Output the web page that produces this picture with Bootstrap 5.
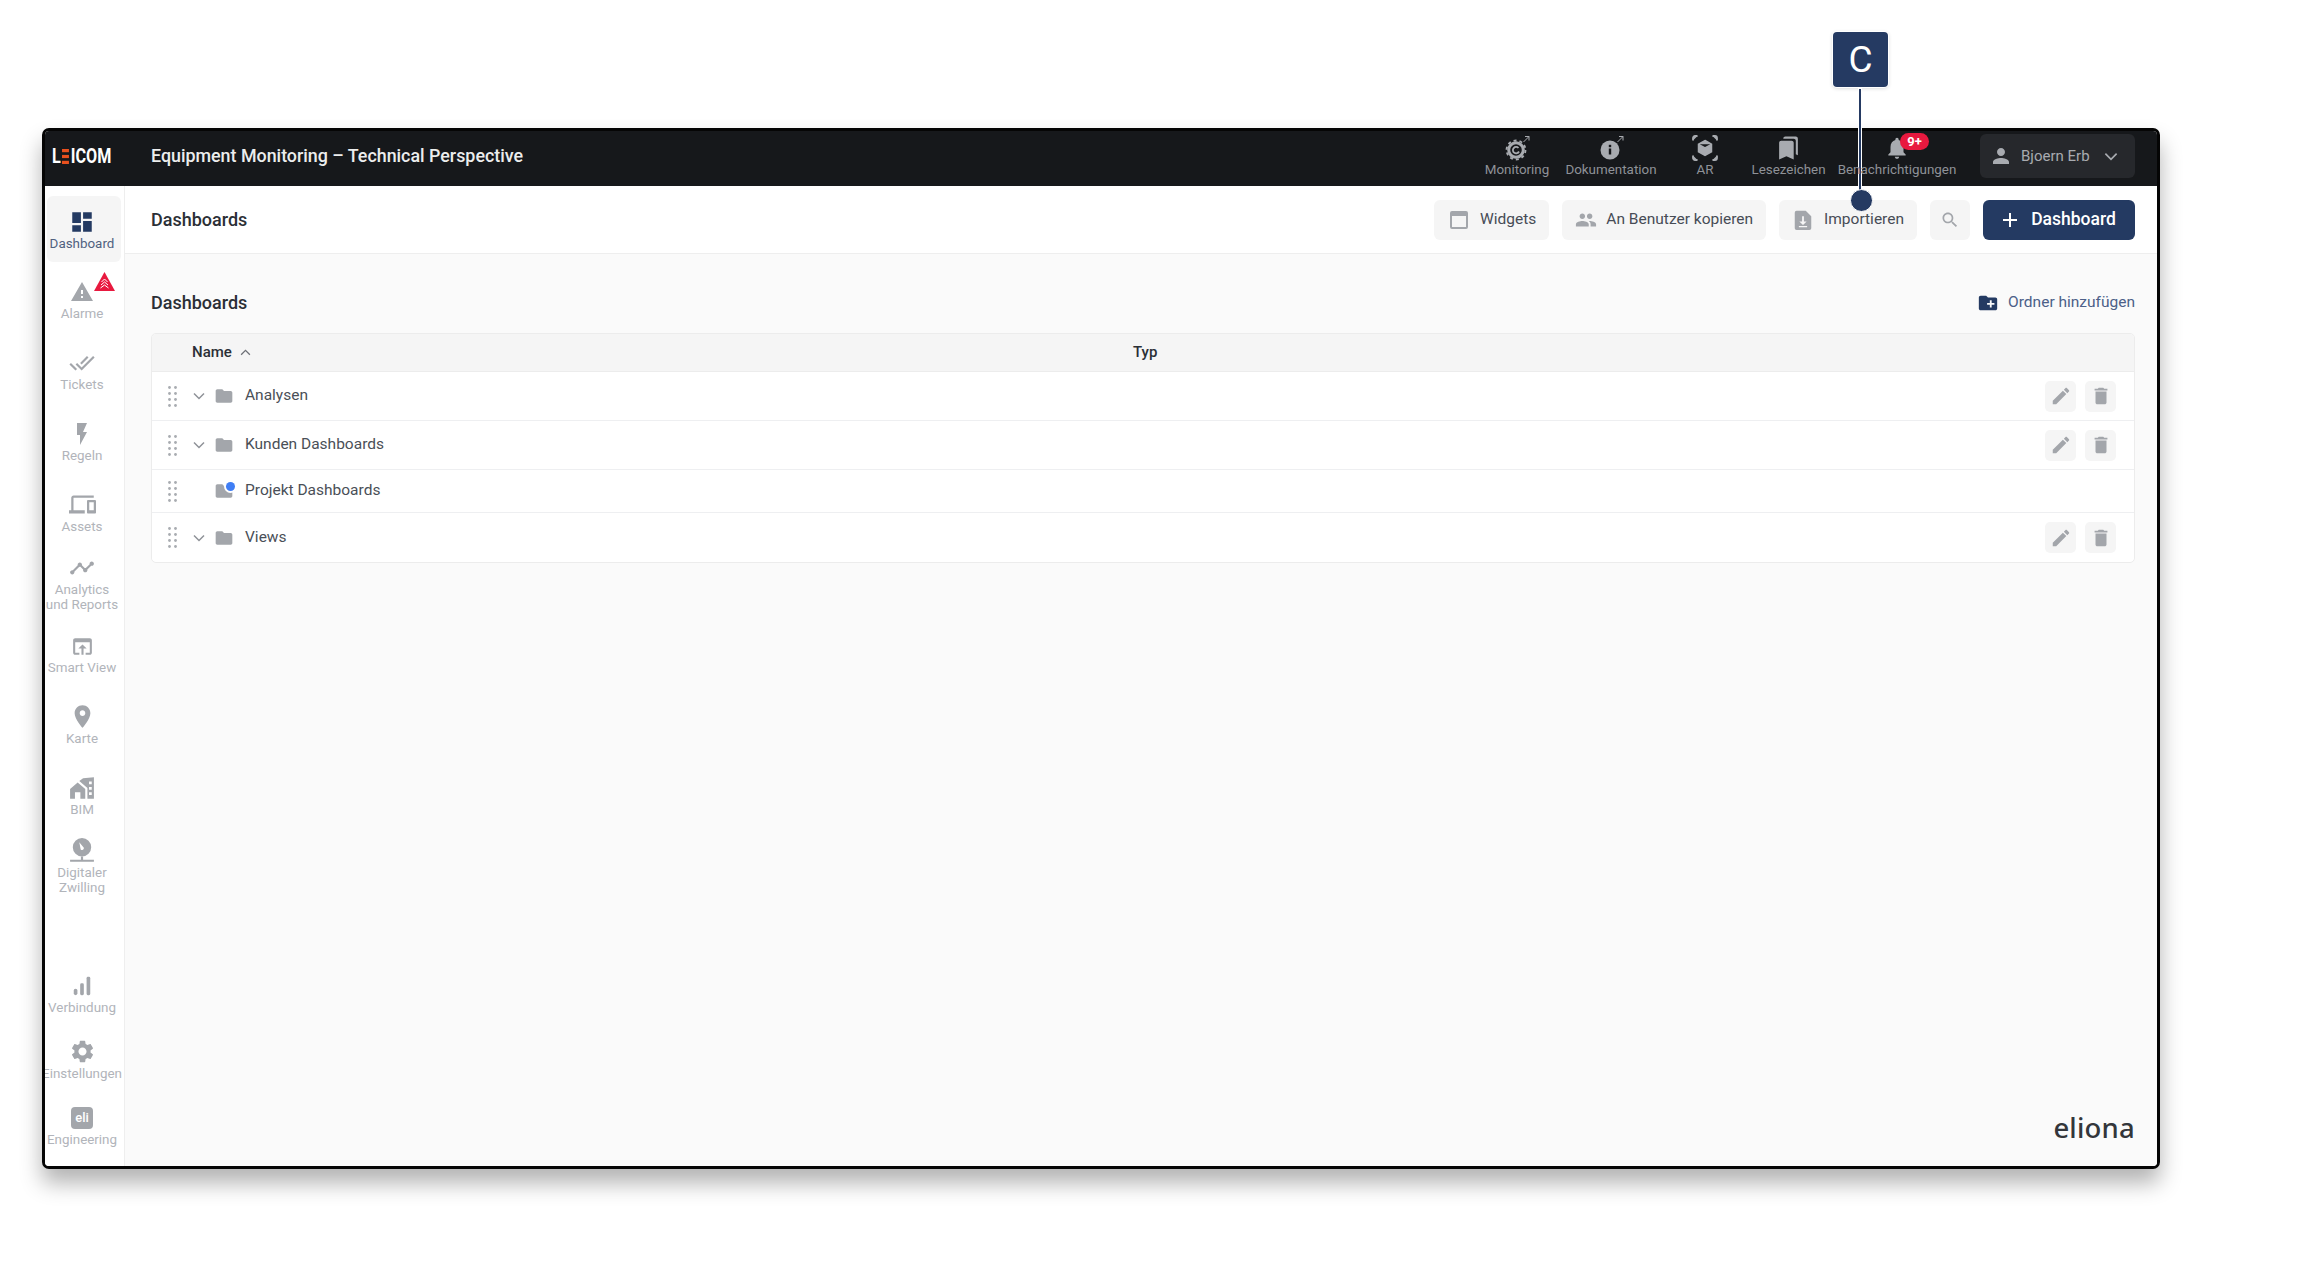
<!doctype html>
<html lang="de">
<head>
<meta charset="utf-8">
<title>Dashboards</title>
<link href="https://cdn.jsdelivr.net/npm/bootstrap@5.3.0/dist/css/bootstrap.min.css" rel="stylesheet">
<style>
html,body{height:100%;}
body{background:#fff;font-family:Roboto,"Liberation Sans",sans-serif;padding:128px 0 0 42px;overflow:hidden;position:relative;color:#2b2f36;}
svg{fill:currentColor;display:block;flex:none;}
.app-window{width:2118px;height:1041px;border:3px solid #050505;border-radius:7px;overflow:hidden;box-shadow:0 14px 22px rgba(0,0,0,.3);background:#fff;}
.top-bar{height:55px;background:#16181b;flex:none;padding-right:22px;}
.brand{width:106px;padding:0 0 4px 7px;flex:none;}
.brand-mark{color:#fff;font-weight:700;font-size:21px;line-height:1;transform:scaleX(.77);transform-origin:left center;}
.brand-mark svg{margin:0 2px;}
.bar-title{color:#eceded;font-size:17.85px;font-weight:500;padding-bottom:4px;}
.bar-item{height:55px;padding-top:4px;color:#a8abb0;position:relative;}
.bar-item span{font-size:13.4px;line-height:15px;margin-top:1px;color:#8f9298;white-space:nowrap;}
.w-mon{width:80px}.w-doc{width:108px}.w-ar{width:80px}.w-les{width:87px}.w-ben{width:130px}
.user-box{width:155px;height:44px;background:#26282c;border-radius:6px;margin:0 0 5px 18px;padding:0 17px 0 9px;color:#a8abb0;font-size:15px;}
.bell-badge{position:absolute;left:68px;top:2px;height:17px;width:29px;background:#e8193f;border-radius:9px;color:#fff;font-size:13px;font-weight:700;line-height:17px;text-align:center;}
.side-nav{width:80px;flex:none;border-right:1px solid #eee;padding:10px 0 8px;background:#fff;}
.nav-cell{height:66px;width:74px;margin-left:1.5px;margin-bottom:4.75px;padding-right:3px;position:relative;color:#a3a6ab;border-radius:6px;text-decoration:none;}
.nav-cell b{font-size:13.4px;font-weight:400;line-height:15px;color:#b1b4ba;text-align:center;white-space:nowrap;}
.nav-cell .ico-box{height:28px;}
.nav-cell.is-active{background:#f5f5f5;color:#243a62;}
.nav-cell.is-active b{color:#50617f;}
.nav-cell.tight{margin-bottom:0;}
.alarm-badge{position:absolute;left:47px;top:5px;}
.eli-chip{width:22px;height:22px;border-radius:4px;background:#a3a6ab;color:#fff;font-size:13px;font-weight:500;line-height:22px;text-align:center;}
.page-main{min-width:0;background:#fafafa;}
.sub-bar{height:68px;background:#fff;border-bottom:1px solid #eee;padding:0 22px 0 26px;flex:none;}
.head-text{font-size:18px;font-weight:500;color:#2b2f36;}
.tool-btn{height:40px;background:#f5f5f5;border:0;border-radius:6px;font-size:15.5px;padding:0 13px;display:flex;align-items:center;color:#474c55;}
.tool-btn svg{color:#a3a6ab;}
.tool-btn:hover{background:#f5f5f5;}
.w-search{width:40px;padding:0;justify-content:center;}
.primary-btn{width:152px;height:40px;background:#243a62;color:#fff;border:0;border-radius:6px;font-size:17.5px;font-weight:500;display:flex;align-items:center;justify-content:center;gap:13px;}
.primary-btn:hover{background:#243a62;color:#fff;}
.body-pad{padding:0 22px 0 26px;flex:1;}
.title-row{height:79px;padding-top:17px;flex:none;}
.add-link{color:#4c6088;font-size:15.5px;text-decoration:none;gap:9px;margin-top:1px;}
.add-link svg{color:#243a62;}
.tree-card{border:1px solid #ececec;border-radius:5px;overflow:hidden;background:#fff;flex:none;}
.tree-head{height:37px;background:#f5f5f5;padding-left:40px;font-size:15px;font-weight:500;color:#2b2f36;}
.tree-head .col-name{width:941px;}
.tree-row{padding:0 18px 0 16px;border:0;border-bottom:2px solid #eeeff1;font-size:15.5px;color:#4a4f57;flex:none;}
.tree-row:last-child{border-bottom:0;}
.row-lg{height:49px}.row-sm{height:43px}.row-end{height:49px}
.grip{width:9px;}
.chev{width:28px;margin-left:8px;color:#8f9298;padding-left:8px;}
.chev-none{width:28px;padding:0;}
.fold{color:#a3a6ab;width:32px;padding-left:1px;position:relative;}
.dot-blue{position:absolute;left:13px;top:.5px;width:9px;height:9px;border-radius:50%;background:#3f7ef5;box-shadow:0 0 0 2px #fff;}
.act-btn{width:31px;height:31px;background:#f5f5f5;border:0;border-radius:5px;padding:0;color:#a3a6ab;display:flex;align-items:center;justify-content:center;}
.act-btn:hover{background:#f5f5f5;color:#a3a6ab;}
.logo-eliona{font-family:"Noto Sans",sans-serif;font-size:27.5px;font-weight:500;line-height:1;color:#33363b;padding-bottom:25px;letter-spacing:.2px;}
.note-box{position:absolute;left:1833px;top:32px;width:55px;height:55px;background:#253a62;border-radius:4px;color:#fff;font-size:37px;line-height:55px;text-align:center;box-shadow:0 0 0 1px #fff,0 1px 4px rgba(0,0,0,.2);}
.note-line{position:absolute;left:1859px;top:89px;width:2px;height:102px;background:#253a62;box-shadow:0 0 0 1px #fff;}
.note-dot{position:absolute;left:1849.5px;top:189px;width:23px;height:23px;background:#253a62;border:1px solid #fff;border-radius:50%;}
</style>
</head>
<body>
<svg width="0" height="0" class="position-absolute">
<defs>
<symbol id="i-dash" viewBox="0 0 24 24"><path d="M3 13h8V3H3v10zm0 8h8v-6H3v6zm10 0h8V11h-8v10zm0-18v6h8V3h-8z"/></symbol>
<symbol id="i-warn" viewBox="0 0 24 24"><path d="M1 21h22L12 2 1 21zm12-3h-2v-2h2v2zm0-4h-2v-4h2v4z"/></symbol>
<symbol id="i-done" viewBox="0 0 24 24"><path d="M18 7l-1.41-1.41-6.34 6.34 1.41 1.41L18 7zm4.24-1.41L11.66 16.17 7.48 12l-1.41 1.41L11.66 19l12-12-1.42-1.41zM.41 13.41L6 19l1.41-1.41L1.83 12 .41 13.41z"/></symbol>
<symbol id="i-bolt" viewBox="0 0 24 24"><path d="M7 1v12h3v10l7-13h-4l4-9z"/></symbol>
<symbol id="i-devices" viewBox="0 0 24 24"><path d="M4 6h18V4H4c-1.1 0-2 .9-2 2v11H0v3h14v-3H4V6zm19 2h-6c-.55 0-1 .45-1 1v10c0 .55.45 1 1 1h6c.55 0 1-.45 1-1V9c0-.55-.45-1-1-1zm-1 9h-4v-7h4v7z"/></symbol>
<symbol id="i-timeline" viewBox="0 0 24 24"><path d="M23 8c0 1.1-.9 2-2 2-.18 0-.35-.02-.51-.07l-3.56 3.55c.05.16.07.34.07.52 0 1.1-.9 2-2 2s-2-.9-2-2c0-.18.02-.36.07-.52l-2.55-2.55c-.16.05-.34.07-.52.07s-.36-.02-.52-.07l-4.55 4.56c.05.16.07.33.07.51 0 1.1-.9 2-2 2s-2-.9-2-2 .9-2 2-2c.18 0 .35.02.51.07l4.56-4.55C8.02 9.36 8 9.18 8 9c0-1.1.9-2 2-2s2 .9 2 2c0 .18-.02.36-.07.52l2.55 2.55c.16-.05.34-.07.52-.07s.36.02.52.07l3.55-3.56C19.02 8.35 19 8.18 19 8c0-1.1.9-2 2-2s2 .9 2 2z"/></symbol>
<symbol id="i-smart" viewBox="0 0 24 24"><path d="M19 4H5c-1.11 0-2 .9-2 2v12c0 1.1.89 2 2 2h4v-2H5V8h14v10h-4v2h4c1.1 0 2-.9 2-2V6c0-1.1-.89-2-2-2zm-7 6l-4 4h3v6h2v-6h3l-4-4z"/></symbol>
<symbol id="i-place" viewBox="0 0 24 24"><path d="M12 2C8.13 2 5 5.13 5 9c0 5.25 7 13 7 13s7-7.75 7-13c0-3.87-3.13-7-7-7zm0 9.5c-1.38 0-2.5-1.12-2.5-2.5s1.12-2.5 2.5-2.5 2.5 1.12 2.5 2.5-1.12 2.5-2.5 2.5z"/></symbol>
<symbol id="i-bim" viewBox="0 0 24 24"><path d="M1 13l7-6 7 6v9h-4.500v-6h-5v6H1z"/><path d="M9.500 5.500 13 3l10-1v20h-6V12zM18.500 6v2.500H21V6zm0 5v2.500H21V11zm0 5v2.500H21V16z" fill-rule="evenodd"/></symbol>
<symbol id="i-twin" viewBox="0 0 24 24"><path fill-rule="evenodd" d="M12 0a8.500 8.500 0 1 1 0 17a8.500 8.500 0 0 1 0-17zM9.500 4l1.300 6.500a1.700 1.700 0 0 0 2.900-1.500z"/><path d="M11 17h2v3h10v2H1v-2h10z"/></symbol>
<symbol id="i-signal" viewBox="0 0 24 24"><rect x="3" y="15" width="4" height="7" rx="2"/><rect x="10" y="9" width="4" height="13" rx="1.500"/><rect x="17" y="2" width="4" height="20" rx="1.500"/></symbol>
<symbol id="i-gear" viewBox="0 0 24 24"><path d="M19.140 12.940c.04-.3.06-.61.06-.94 0-.32-.02-.64-.07-.94l2.030-1.580c.18-.14.23-.41.12-.61l-1.920-3.320c-.12-.22-.37-.29-.59-.22l-2.390.96c-.5-.38-1.030-.7-1.620-.94l-.36-2.540c-.04-.24-.24-.41-.48-.41h-3.840c-.24 0-.43.17-.47.41l-.36 2.540c-.59.24-1.130.57-1.620.94l-2.390-.96c-.22-.08-.47 0-.59.22L2.740 8.870c-.12.21-.08.47.12.61l2.030 1.580c-.05.3-.09.63-.09.94s.02.64.07.94l-2.030 1.580c-.18.14-.23.41-.12.61l1.920 3.320c.12.22.37.29.59.22l2.390-.96c.5.38 1.030.7 1.620.94l.36 2.540c.05.24.24.41.48.41h3.840c.24 0 .44-.17.47-.41l.36-2.540c.59-.24 1.130-.56 1.620-.94l2.390.96c.22.08.47 0 .59-.22l1.920-3.320c.12-.22.07-.47-.12-.61l-2.010-1.580zM12 15.600c-1.980 0-3.600-1.620-3.600-3.600s1.620-3.600 3.600-3.600 3.600 1.620 3.600 3.600-1.620 3.600-3.600 3.600z"/></symbol>
<symbol id="i-books" viewBox="0 0 24 24"><path d="M19 18l2 1V3c0-1.100-.9-2-2-2H8.990C7.890 1 7 1.900 7 3h10c1.100 0 2 .9 2 2v13zM15 5H5c-1.100 0-2 .9-2 2v16l7-3 7 3V7c0-1.100-.9-2-2-2z"/></symbol>
<symbol id="i-bell" viewBox="0 0 24 24"><path d="M12 22c1.100 0 2-.9 2-2h-4c0 1.100.89 2 2 2zm6-6v-5c0-3.070-1.640-5.640-4.500-6.320V4c0-.83-.67-1.500-1.500-1.500s-1.500.67-1.500 1.500v.68C7.630 5.360 6 7.920 6 11v5l-2 2v1h16v-1l-2-2z"/></symbol>
<symbol id="i-person" viewBox="0 0 24 24"><path d="M12 12c2.210 0 4-1.790 4-4s-1.790-4-4-4-4 1.790-4 4 1.790 4 4 4zm0 2c-2.670 0-8 1.340-8 4v2h16v-2c0-2.660-5.330-4-8-4z"/></symbol>
<symbol id="i-people" viewBox="0 0 24 24"><path d="M16 11c1.660 0 2.990-1.340 2.990-3S17.660 5 16 5c-1.660 0-3 1.340-3 3s1.340 3 3 3zm-8 0c1.660 0 2.990-1.340 2.990-3S9.660 5 8 5C6.340 5 5 6.340 5 8s1.340 3 3 3zm0 2c-2.330 0-7 1.170-7 3.500V19h14v-2.500c0-2.330-4.670-3.500-7-3.500zm8 0c-.29 0-.62.02-.97.05 1.160.84 1.970 1.970 1.970 3.450V19h6v-2.500c0-2.330-4.670-3.500-7-3.500z"/></symbol>
<symbol id="i-search" viewBox="0 0 24 24"><path d="M15.500 14h-.79l-.28-.27C15.410 12.590 16 11.110 16 9.500 16 5.910 13.090 3 9.500 3S3 5.910 3 9.500 5.910 16 9.500 16c1.610 0 3.090-.59 4.230-1.570l.27.28v.79l5 4.990L20.490 19l-4.990-5zm-6 0C7.010 14 5 11.990 5 9.500S7.010 5 9.500 5 14 7.010 14 9.500 11.990 14 9.500 14z"/></symbol>
<symbol id="i-folder" viewBox="0 0 24 24"><path d="M10 4H4c-1.100 0-1.990.9-1.990 2L2 18c0 1.100.9 2 2 2h16c1.100 0 2-.9 2-2V8c0-1.100-.9-2-2-2h-8l-2-2z"/></symbol>
<symbol id="i-newfolder" viewBox="0 0 24 24"><path d="M20 6h-8l-2-2H4c-1.110 0-1.990.89-1.990 2L2 18c0 1.110.89 2 2 2h16c1.110 0 2-.89 2-2V8c0-1.110-.89-2-2-2zm-1 8h-3v3h-2v-3h-3v-2h3V9h2v3h3v2z"/></symbol>
<symbol id="i-edit" viewBox="0 0 24 24"><path d="M3 17.250V21h3.750L17.810 9.940l-3.750-3.750L3 17.250zM20.710 7.040c.39-.39.39-1.020 0-1.410l-2.340-2.340c-.39-.39-1.020-.39-1.410 0l-1.830 1.830 3.750 3.750 1.830-1.830z"/></symbol>
<symbol id="i-trash" viewBox="0 0 24 24"><path d="M6 19c0 1.100.9 2 2 2h8c1.100 0 2-.9 2-2V7H6v12zM19 4h-3.500l-1-1h-5l-1 1H5v2h14V4z"/></symbol>
<symbol id="i-window" viewBox="0 0 24 24"><path fill-rule="evenodd" d="M5 3h14a2 2 0 0 1 2 2v14a2 2 0 0 1-2 2H5a2 2 0 0 1-2-2V5a2 2 0 0 1 2-2zm0 5v11h14V8z"/></symbol>
<symbol id="i-import" viewBox="0 0 24 24"><path fill-rule="evenodd" d="M15 2H5a2 2 0 0 0-2 2v17a2 2 0 0 0 2 2h14a2 2 0 0 0 2-2V8zM11 8h2v5.500h3l-4 4-4-4h3zM7.500 18.500h9V20h-9z"/></symbol>
<symbol id="i-grip" viewBox="0 0 9 21"><g fill="#a9acb1"><circle cx="1.500" cy="1.500" r="1.400"/><circle cx="7.500" cy="1.500" r="1.400"/><circle cx="1.500" cy="7.500" r="1.400"/><circle cx="7.500" cy="7.500" r="1.400"/><circle cx="1.500" cy="13.500" r="1.400"/><circle cx="7.500" cy="13.500" r="1.400"/><circle cx="1.500" cy="19.500" r="1.400"/><circle cx="7.500" cy="19.500" r="1.400"/></g></symbol>
<symbol id="i-chev" viewBox="0 0 12 8"><path d="M1 1.500l5 5 5-5" fill="none" stroke="currentColor" stroke-width="1.500"/></symbol>
</defs>
</svg>

<div class="note-box">C</div>
<div class="note-line"></div>
<div class="note-dot"></div>

<div class="app-window d-flex flex-column">
  <header class="top-bar d-flex align-items-center">
    <div class="brand"><div class="brand-mark d-flex align-items-center"><span>L</span><svg width="9" height="15" viewBox="0 0 9 15"><rect width="9" height="3.200" fill="#e8501e"/><rect y="5.900" width="9" height="3.200" fill="#e8501e"/><rect y="11.800" width="9" height="3.200" fill="#e8501e"/></svg><span>ICOM</span></div></div>
    <div class="bar-title">Equipment Monitoring – Technical Perspective</div>
    <nav class="d-flex align-items-start ms-auto">
      <div class="bar-item w-mon d-flex flex-column align-items-center">
        <svg width="26" height="26" viewBox="0 0 26 26"><circle cx="12" cy="15" r="7.300" fill="none" stroke="#a8abb0" stroke-width="3"/><circle cx="12" cy="15" r="9.500" fill="none" stroke="#a8abb0" stroke-width="1.800" stroke-dasharray="3 3"/><path d="M14.500 13a3.200 3.200 0 1 0 .5 3.500" fill="none" stroke="#a8abb0" stroke-width="1.800"/><path d="M19.500 7L25 1.500M21 1.500h4V5.500" fill="none" stroke="#a8abb0" stroke-width="1"/></svg>
        <span>Monitoring</span>
      </div>
      <div class="bar-item w-doc d-flex flex-column align-items-center">
        <svg width="26" height="26" viewBox="0 0 26 26"><circle cx="12" cy="15" r="9.500" fill="#a8abb0"/><rect x="10.800" y="13.500" width="2.400" height="6" fill="#16181b"/><rect x="10.800" y="9.800" width="2.400" height="2.400" fill="#16181b"/><path d="M19.500 7L25 1.500M21 1.500h4V5.500" fill="none" stroke="#a8abb0" stroke-width="1"/></svg>
        <span>Dokumentation</span>
      </div>
      <div class="bar-item w-ar d-flex flex-column align-items-center">
        <svg width="26" height="26" viewBox="0 0 26 26" fill="none" stroke="#a8abb0" stroke-width="1.500"><path d="M1 5.500V3a2 2 0 0 1 2-2h2.500M20.500 1H23a2 2 0 0 1 2 2v2.500M25 20.500V23a2 2 0 0 1-2 2h-2.500M5.500 25H3a2 2 0 0 1-2-2v-2.500" stroke-width="1.800"/><path d="M13 5.500l6.500 3.800v7.400L13 20.500l-6.500-3.800V9.300zM6.500 9.300L13 13l6.500-3.700M13 13v7.500"/></svg>
        <span>AR</span>
      </div>
      <div class="bar-item w-les d-flex flex-column align-items-center">
        <svg width="25" height="26"><use href="#i-books"/></svg>
        <span>Lesezeichen</span>
      </div>
      <div class="bar-item w-ben d-flex flex-column align-items-center">
        <svg width="26" height="26"><use href="#i-bell"/></svg>
        <span>Benachrichtigungen</span>
        <div class="bell-badge">9+</div>
      </div>
    </nav>
    <div class="user-box d-flex align-items-center">
      <svg width="24" height="24" class="me-1"><use href="#i-person"/></svg>
      <span class="flex-grow-1 ms-1">Bjoern Erb</span>
      <svg width="14" height="9" viewBox="0 0 12 8"><use href="#i-chev"/></svg>
    </div>
  </header>

  <div class="d-flex flex-grow-1" style="min-height:0">
    <aside class="side-nav d-flex flex-column">
      <a class="nav-cell is-active d-flex flex-column align-items-center justify-content-center"><div class="ico-box d-flex align-items-center"><svg width="26" height="26"><use href="#i-dash"/></svg></div><b>Dashboard</b></a>
      <a class="nav-cell d-flex flex-column align-items-center justify-content-center"><div class="ico-box d-flex align-items-center"><svg width="24" height="24"><use href="#i-warn"/></svg></div><b>Alarme</b>
        <svg class="alarm-badge" width="21" height="19" viewBox="0 0 21 19"><path d="M10.500 0L21 19H0z" fill="#e8193f"/><path d="M7.500 10l3-3 3 3M7 13l3.500-3 3.500 3M6.500 16l4-3 4 3" fill="none" stroke="#fff" stroke-width="1"/></svg></a>
      <a class="nav-cell d-flex flex-column align-items-center justify-content-center"><div class="ico-box d-flex align-items-center"><svg width="26" height="26"><use href="#i-done"/></svg></div><b>Tickets</b></a>
      <a class="nav-cell d-flex flex-column align-items-center justify-content-center"><div class="ico-box d-flex align-items-center"><svg width="24" height="24"><use href="#i-bolt"/></svg></div><b>Regeln</b></a>
      <a class="nav-cell d-flex flex-column align-items-center justify-content-center"><div class="ico-box d-flex align-items-center"><svg width="27" height="27"><use href="#i-devices"/></svg></div><b>Assets</b></a>
      <a class="nav-cell d-flex flex-column align-items-center justify-content-center"><div class="ico-box d-flex align-items-center"><svg width="26" height="26"><use href="#i-timeline"/></svg></div><b>Analytics<br>und Reports</b></a>
      <a class="nav-cell d-flex flex-column align-items-center justify-content-center"><div class="ico-box d-flex align-items-center"><svg width="25" height="25"><use href="#i-smart"/></svg></div><b>Smart View</b></a>
      <a class="nav-cell d-flex flex-column align-items-center justify-content-center"><div class="ico-box d-flex align-items-center"><svg width="27" height="27"><use href="#i-place"/></svg></div><b>Karte</b></a>
      <a class="nav-cell d-flex flex-column align-items-center justify-content-center"><div class="ico-box d-flex align-items-center"><svg width="26" height="26"><use href="#i-bim"/></svg></div><b>BIM</b></a>
      <a class="nav-cell d-flex flex-column align-items-center justify-content-center"><div class="ico-box d-flex align-items-center"><svg width="26" height="26"><use href="#i-twin"/></svg></div><b>Digitaler<br>Zwilling</b></a>
      <div class="mt-auto">
        <a class="nav-cell tight d-flex flex-column align-items-center justify-content-center"><div class="ico-box d-flex align-items-center"><svg width="22" height="22"><use href="#i-signal"/></svg></div><b>Verbindung</b></a>
        <a class="nav-cell tight d-flex flex-column align-items-center justify-content-center"><div class="ico-box d-flex align-items-center"><svg width="27" height="27"><use href="#i-gear"/></svg></div><b>Einstellungen</b></a>
        <a class="nav-cell tight d-flex flex-column align-items-center justify-content-center"><div class="ico-box d-flex align-items-center"><div class="eli-chip">eli</div></div><b>Engineering</b></a>
      </div>
    </aside>

    <main class="page-main flex-grow-1 d-flex flex-column">
      <div class="sub-bar d-flex align-items-center">
        <div class="head-text me-auto">Dashboards</div>
        <div class="d-flex" style="gap:13px">
          <button class="btn tool-btn" style="gap:9px"><svg width="24" height="24"><use href="#i-window"/></svg>Widgets</button>
          <button class="btn tool-btn" style="gap:9px"><svg width="22" height="22"><use href="#i-people"/></svg>An Benutzer kopieren</button>
          <button class="btn tool-btn" style="gap:10px"><svg width="22" height="22"><use href="#i-import"/></svg>Importieren</button>
          <button class="btn tool-btn w-search"><svg width="20" height="20"><use href="#i-search"/></svg></button>
          <button class="btn primary-btn"><svg width="16" height="16" viewBox="0 0 16 16"><path d="M7 1h2v6h6v2H9v6H7V9H1V7h6z"/></svg>Dashboard</button>
        </div>
      </div>
      <div class="body-pad d-flex flex-column">
        <div class="title-row d-flex align-items-center justify-content-between">
          <div class="head-text">Dashboards</div>
          <a class="add-link d-flex align-items-center"><svg width="22" height="22"><use href="#i-newfolder"/></svg>Ordner hinzufügen</a>
        </div>
        <div class="card tree-card">
          <div class="tree-head d-flex align-items-center">
            <div class="col-name d-flex align-items-center gap-2">Name <svg width="11" height="7" viewBox="0 0 12 8" style="color:#6f7278"><path d="M1 6.500l5-5 5 5" fill="none" stroke="currentColor" stroke-width="1.500"/></svg></div>
            <div>Typ</div>
          </div>
          <ul class="list-group list-group-flush">
            <li class="list-group-item tree-row row-lg d-flex align-items-center"><svg class="grip" width="9" height="21"><use href="#i-grip"/></svg><div class="chev"><svg width="12" height="8"><use href="#i-chev"/></svg></div><div class="fold"><svg width="20" height="20"><use href="#i-folder"/></svg></div><span class="flex-grow-1">Analysen</span><div class="d-flex" style="gap:9px"><button class="btn act-btn"><svg width="22" height="22"><use href="#i-edit"/></svg></button><button class="btn act-btn"><svg width="22" height="22"><use href="#i-trash"/></svg></button></div></li>
            <li class="list-group-item tree-row row-lg d-flex align-items-center"><svg class="grip" width="9" height="21"><use href="#i-grip"/></svg><div class="chev"><svg width="12" height="8"><use href="#i-chev"/></svg></div><div class="fold"><svg width="20" height="20"><use href="#i-folder"/></svg></div><span class="flex-grow-1">Kunden Dashboards</span><div class="d-flex" style="gap:9px"><button class="btn act-btn"><svg width="22" height="22"><use href="#i-edit"/></svg></button><button class="btn act-btn"><svg width="22" height="22"><use href="#i-trash"/></svg></button></div></li>
            <li class="list-group-item tree-row row-sm d-flex align-items-center"><svg class="grip" width="9" height="21"><use href="#i-grip"/></svg><div class="chev chev-none"></div><div class="fold"><svg width="20" height="20"><use href="#i-folder"/></svg><i class="dot-blue"></i></div><span class="flex-grow-1">Projekt Dashboards</span></li>
            <li class="list-group-item tree-row row-end d-flex align-items-center"><svg class="grip" width="9" height="21"><use href="#i-grip"/></svg><div class="chev"><svg width="12" height="8"><use href="#i-chev"/></svg></div><div class="fold"><svg width="20" height="20"><use href="#i-folder"/></svg></div><span class="flex-grow-1">Views</span><div class="d-flex" style="gap:9px"><button class="btn act-btn"><svg width="22" height="22"><use href="#i-edit"/></svg></button><button class="btn act-btn"><svg width="22" height="22"><use href="#i-trash"/></svg></button></div></li>
          </ul>
        </div>
        <div class="mt-auto d-flex justify-content-end"><div class="logo-eliona">eliona</div></div>
      </div>
    </main>
  </div>
</div>
<script src="https://cdn.jsdelivr.net/npm/bootstrap@5.3.0/dist/js/bootstrap.bundle.min.js"></script>
</body>
</html>
